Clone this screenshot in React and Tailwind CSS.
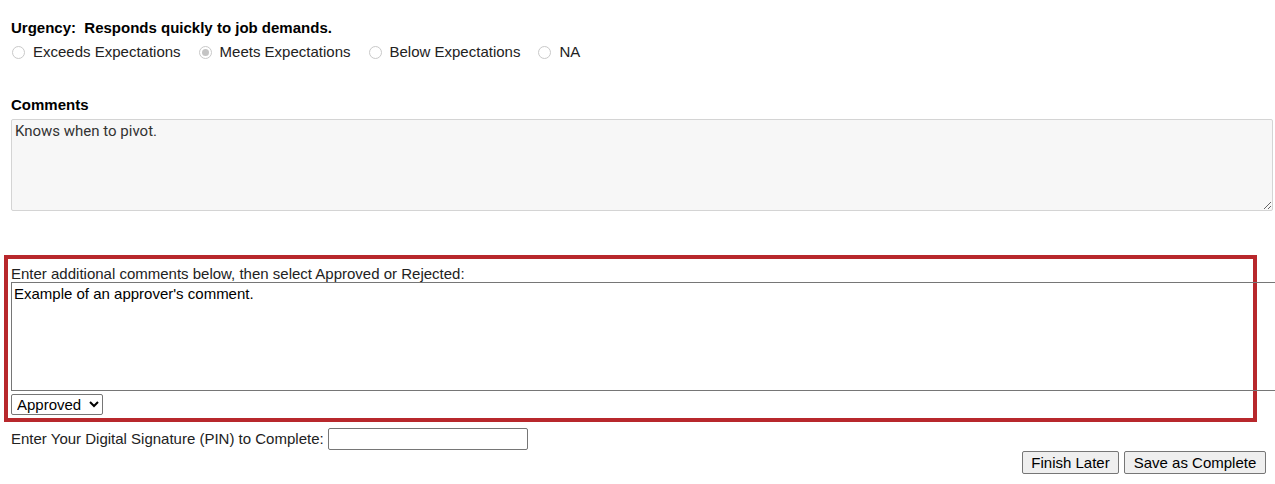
import React, { useState } from 'react';

const options = ['Exceeds Expectations', 'Meets Expectations', 'Below Expectations', 'NA'];

function Radio({ label, checked }) {
  return (
    <label className="flex items-center mr-[17px]">
      <span className="w-[13px] h-[13px] rounded-full border border-[#c9c9c9] bg-white flex items-center justify-center ml-[1px] mr-[8px]">
        {checked && <span className="w-[7px] h-[7px] rounded-full bg-[#c4c4c4]" />}
      </span>
      <span>{label}</span>
    </label>
  );
}

export default function App() {
  const [status, setStatus] = useState('Approved');
  const [pin, setPin] = useState('');

  return (
    <div className="w-[1275px] h-[484px] overflow-hidden bg-white text-[15px] text-black font-['Liberation_Sans',Arial,sans-serif]">
      <div className="px-[11px] pt-[19px]">
        <div className="font-bold leading-[17px]">Urgency:&nbsp; Responds quickly to job demands.</div>
        <div className="flex items-center mt-[8px] h-[17px] text-[#222]">
          {options.map((o) => (
            <Radio key={o} label={o} checked={o === 'Meets Expectations'} />
          ))}
        </div>

        <div className="font-bold leading-[17px] mt-[35px]">Comments</div>
        <textarea
          readOnly
          defaultValue="Knows when to pivot."
          className="block mt-[6px] w-[1262px] h-[92px] bg-[#f7f7f7] border border-[#d4d4d4] rounded-[2px] px-[3px] py-[2px] text-[15px] leading-[18px] text-[#333] font-['Roboto',sans-serif] resize-y outline-none"
        />
      </div>

      <div className="ml-[4px] mt-[44px] w-[1253px] h-[167px] border-[4px] border-[#b8282c] pl-[3px] pt-[6px]">
        <div className="leading-[17px] text-[#222]">Enter additional comments below, then select Approved or Rejected:</div>
        <textarea
          defaultValue="Example of an approver's comment."
          className="block w-[1275px] h-[109px] border border-[#767676] px-[2px] py-[2px] text-[15px] leading-[18px] text-black resize-none outline-none font-['Liberation_Sans',Arial,sans-serif]"
        />
        <select
          value={status}
          onChange={(e) => setStatus(e.target.value)}
          className="block mt-[3px] w-[92px] h-[21px] border border-[#767676] rounded-[2px] bg-white text-[15px] pl-[1px] font-['Liberation_Sans',Arial,sans-serif] appearance-auto"
        >
          <option>Approved</option>
          <option>Rejected</option>
        </select>
      </div>

      <div className="px-[11px] mt-[6px] flex items-center h-[22px]">
        <span className="text-[#222] mr-[4px]">Enter Your Digital Signature (PIN) to Complete:</span>
        <input
          type="password"
          value={pin}
          onChange={(e) => setPin(e.target.value)}
          className="w-[200px] h-[22px] border border-[#767676] rounded-[2px] px-[2px] outline-none"
        />
      </div>

      <div className="flex justify-end pr-[9px] gap-[5px] mt-[1px]">
        <button className="w-[97px] h-[23px] border border-[#767676] rounded-[2px] bg-[#efefef] text-[15px] text-black">Finish Later</button>
        <button className="w-[142px] h-[23px] border border-[#767676] rounded-[2px] bg-[#efefef] text-[15px] text-black">Save as Complete</button>
      </div>
    </div>
  );
}
